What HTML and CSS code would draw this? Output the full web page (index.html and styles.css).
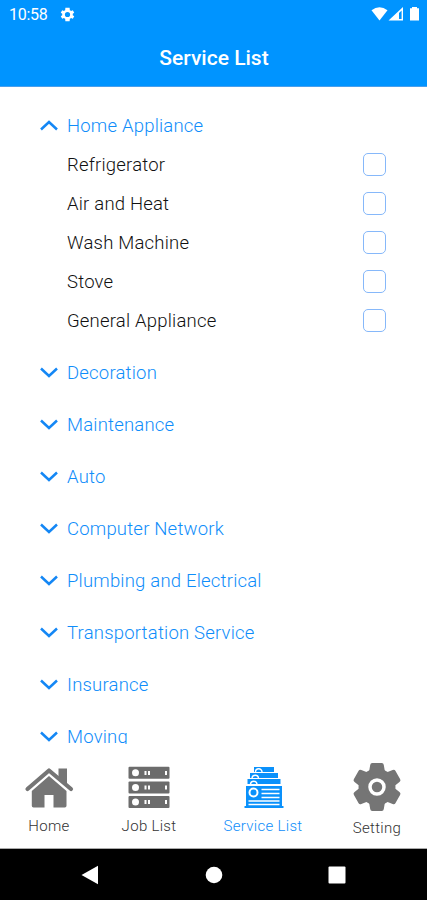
FILE: index.html
```html
<!DOCTYPE html>
<html lang="en">
<head>
  <meta charset="UTF-8" />
  <meta name="viewport" content="width=device-width, initial-scale=1" />
  <title>Service List</title>
  <link rel="stylesheet" href="styles.css">
</head>
<body>

<header>
  <div class="status-bar">
    <span class="time">10:58</span>
    <svg class="status-gear" width="17" height="17" viewBox="0 0 24 24"><path fill="#fff" fill-rule="evenodd" d="M19.4 13a7.500 7.500 0 0 0 0-2l2.100-1.600-2-3.500-2.500 1a7.500 7.500 0 0 0-1.700-1L15 2.500h-6l-.3 3.400a7.500 7.500 0 0 0-1.700 1l-2.500-1-2 3.500L4.600 11a7.500 7.500 0 0 0 0 2l-2.100 1.600 2 3.500 2.500-1a7.500 7.500 0 0 0 1.700 1l.3 3.400h6l.3-3.400a7.500 7.500 0 0 0 1.700-1l2.500 1 2-3.500zM12 15.700a3.700 3.700 0 1 1 0-7.400 3.700 3.700 0 0 1 0 7.400z"/></svg>
    <svg class="status-icons" width="50" height="16" viewBox="0 0 50 16">
      <path fill="#fff" d="M.5 4.200Q8.500-1.600 16.500 4.200L8.500 14.500z"/>
      <path fill="#fff" d="M17.500 14.500L32 1v13.500zM28 7v6h2.600V4.600z" fill-rule="evenodd"/>
      <path fill="#fff" d="M39 2.300h2V1h5v1.300h2v12.200h-9z"/>
    </svg>
  </div>
  <h1>Service List</h1>
</header>

<main>
  <section class="group open">
    <h2><svg class="chevron" viewBox="0 0 18 12"><path d="M1 9.500L9 2l8 7.500"/></svg>Home Appliance</h2>
    <label><span>Refrigerator</span><input type="checkbox"></label>
    <label><span>Air and Heat</span><input type="checkbox"></label>
    <label><span>Wash Machine</span><input type="checkbox"></label>
    <label><span>Stove</span><input type="checkbox"></label>
    <label><span>General Appliance</span><input type="checkbox"></label>
  </section>
  <section class="group"><h2><svg class="chevron" viewBox="0 0 18 12"><path d="M1 1.500L9 9l8-7.500"/></svg>Decoration</h2></section>
  <section class="group"><h2><svg class="chevron" viewBox="0 0 18 12"><path d="M1 1.500L9 9l8-7.500"/></svg>Maintenance</h2></section>
  <section class="group"><h2><svg class="chevron" viewBox="0 0 18 12"><path d="M1 1.500L9 9l8-7.500"/></svg>Auto</h2></section>
  <section class="group"><h2><svg class="chevron" viewBox="0 0 18 12"><path d="M1 1.500L9 9l8-7.500"/></svg>Computer Network</h2></section>
  <section class="group"><h2><svg class="chevron" viewBox="0 0 18 12"><path d="M1 1.500L9 9l8-7.500"/></svg>Plumbing and Electrical</h2></section>
  <section class="group"><h2><svg class="chevron" viewBox="0 0 18 12"><path d="M1 1.500L9 9l8-7.500"/></svg>Transportation Service</h2></section>
  <section class="group"><h2><svg class="chevron" viewBox="0 0 18 12"><path d="M1 1.500L9 9l8-7.500"/></svg>Insurance</h2></section>
  <section class="group"><h2><svg class="chevron" viewBox="0 0 18 12"><path d="M1 1.500L9 9l8-7.500"/></svg>Moving</h2></section>
</main>

<nav class="tabs">
  <a class="tab home">
    <svg width="50" height="50" viewBox="0 0 50 50">
      <path fill="#757575" d="M34.500 6.500h8.500V24l-8.500-7z"/>
      <path fill="none" stroke="#757575" stroke-width="4.200" stroke-linecap="round" stroke-linejoin="round" d="M3.500 27L25 8.500 47 27"/>
      <path fill="#757575" d="M25 14L42.500 29v14.800q0 1.700-1.700 1.700H29.500V33h-9v12.500H9.500q-1.700 0-1.700-1.700V29z"/>
    </svg>
    <span>Home</span>
  </a>
  <a class="tab jobs">
    <svg width="50" height="50" viewBox="0 0 50 50">
      <g fill="#6c6c6c">
        <rect x="4.500" y="4.700" width="41" height="12" rx="1"/>
        <rect x="4.500" y="19.500" width="41" height="12" rx="1"/>
        <rect x="4.500" y="34" width="41" height="12" rx="1"/>
      </g>
      <g fill="#fff">
        <circle cx="11.500" cy="10.700" r="3.500"/><path d="M20.500 9h2v4h-2zM24 9h2v4h-2zM41 9h2v4h-2z"/>
        <circle cx="11.500" cy="25.500" r="3.500"/><path d="M20.500 23.500h2v4h-2zM24 23.500h2v4h-2zM41 23.500h2v4h-2z"/>
        <circle cx="11.500" cy="40" r="3.500"/><path d="M20.500 38h2v4h-2zM24 38h2v4h-2zM41 38h2v4h-2z"/>
      </g>
    </svg>
    <span>Job List</span>
  </a>
  <a class="tab services active">
    <svg width="50" height="50" viewBox="0 0 50 50">
      <g fill="#0a91fb">
        <path d="M16 5h20v5H16zM12 11h28v5H12zM9.500 17h33v5h-33zM8 24h36v20h1.500v2h-39v-2H8z"/>
      </g>
      <g fill="none" stroke="#fff" stroke-width="1.400">
        <path d="M17.500 10a3.200 3.200 0 0 1 6.500 0M14 16a3.300 3.300 0 0 1 6.500 0M12.500 22a3.300 3.300 0 0 1 6.500 0"/>
        <circle cx="15.500" cy="30.500" r="4" stroke-width="2"/>
        <path d="M23.500 27.500h18M23.500 31.500h18M23.500 35.500h18M10.500 39h31M10.500 42.500h31"/>
      </g>
    </svg>
    <span>Service List</span>
  </a>
  <a class="tab setting">
    <svg width="50" height="50" viewBox="0 0 50 50">
      <g fill="#757575">
        <circle cx="25" cy="25" r="18.500"/>
        <path id="tooth" d="M16.500 13L18.200 3q.3-2 2-2h9.600q1.700 0 2 2l1.700 10z"/>
        <use href="#tooth" transform="rotate(60 25 25)"/>
        <use href="#tooth" transform="rotate(120 25 25)"/>
        <use href="#tooth" transform="rotate(180 25 25)"/>
        <use href="#tooth" transform="rotate(240 25 25)"/>
        <use href="#tooth" transform="rotate(300 25 25)"/>
      </g>
      <circle cx="25" cy="25" r="7" fill="none" stroke="#fff" stroke-width="3.500"/>
    </svg>
    <span>Setting</span>
  </a>
</nav>

<footer>
  <svg width="20" height="20" viewBox="0 0 20 20"><path fill="#fff" d="M1.500 10L18 .8v18.400z"/></svg>
  <svg width="20" height="20" viewBox="0 0 20 20"><circle cx="10" cy="10" r="8.300" fill="#fff"/></svg>
  <svg width="20" height="20" viewBox="0 0 20 20"><rect x="1.500" y="1.500" width="17" height="17" rx="1" fill="#fff"/></svg>
</footer>

</body>
</html>
```
FILE: styles.css
```css
* {
  box-sizing: border-box;
}
body {
  margin: 0;
  height: 900px;
  display: flex;
  flex-direction: column;
  overflow: hidden;
  background: #fff;
  color: #111;
  font-family: Roboto, sans-serif;
}
header {
  flex: none;
  height: 87px;
  background: #0094ff;
  color: #fff;
  border-bottom: 1px solid #4a9fec;
}
.status-bar {
  display: flex;
  align-items: center;
  height: 28px;
  padding: 0 6px 0 9px;
}
.time {
  width: 50px;
  font-size: 16px;
  letter-spacing: -0.3px;
}
.status-icons {
  margin-left: auto;
}
h1 {
  margin: 0;
  padding-left: 1px;
  font-size: 21px;
  font-weight: 500;
  line-height: 60px;
  text-align: center;
}
main {
  flex: none;
  height: 657px;
  padding: 19px 41px 0 40px;
  overflow: hidden;
}
h2 {
  display: flex;
  align-items: center;
  height: 52px;
  margin: 0;
  color: #0f8dfa;
  font-size: 18.5px;
  font-weight: 300;
  letter-spacing: 0.2px;
}
.open {
  padding-bottom: 7px;
}
.open h2,
.group label {
  height: 39px;
}
.chevron {
  width: 18px;
  height: 12px;
  margin-right: 9px;
  fill: none;
  stroke: #1487f5;
  stroke-width: 2.5;
}
.group label {
  display: flex;
  align-items: center;
  justify-content: space-between;
  padding-left: 27px;
  font-size: 18.5px;
  font-weight: 300;
  letter-spacing: 0.2px;
}
input[type="checkbox"] {
  appearance: none;
  width: 23px;
  height: 23px;
  margin: 0 0 1px;
  border: 1px solid #86b8fa;
  border-radius: 5px;
}
.tabs {
  flex: none;
  display: grid;
  grid-template-columns: 98px 102px 126px 102px;
  height: 105px;
  padding-top: 18px;
  border-bottom: 1px solid #aaa;
}
.tab {
  display: flex;
  flex-direction: column;
  align-items: center;
  color: #333;
  font-size: 15px;
  font-weight: 300;
  letter-spacing: 0.3px;
}
.tab span {
  margin-top: 5px;
}
.active {
  color: #0f8dfa;
}
.setting span {
  margin-top: 7px;
}
footer {
  flex: 1;
  display: flex;
  align-items: center;
  justify-content: space-between;
  padding: 0 80px;
  background: #000;
}
```
